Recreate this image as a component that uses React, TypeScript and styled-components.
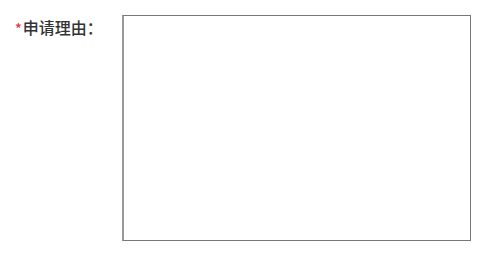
import React from "react";
import styled, { createGlobalStyle } from "styled-components";

const GlobalStyle = createGlobalStyle`
  body {
    margin: 0;
    background: #fff;
    font-family: "Noto Sans CJK SC", "Liberation Sans", sans-serif;
  }
`;

const Form = styled.form`
  padding: 15px 0 0 15px;
`;

const Row = styled.div`
  display: flex;
  align-items: flex-start;
`;

const Label = styled.label`
  width: 107px;
  padding-top: 2px;
  font-size: 16px;
  line-height: 20px;
  color: #333;
  font-weight: 500;
`;

const Required = styled.span`
  color: #e4393c;
  font-size: 14px;
  margin-right: 1px;
`;

const Reason = styled.textarea`
  box-sizing: border-box;
  width: 349px;
  height: 226px;
  border: 1px solid #777;
  border-left: 2px solid #999;
  outline: none;
  resize: none;
  padding: 4px;
  font-size: 14px;
  font-family: inherit;
`;

export default function App() {
  return (
    <>
      <GlobalStyle />
      <Form>
        <Row>
          <Label htmlFor="reason">
            <Required>*</Required>申请理由：
          </Label>
          <Reason id="reason" />
        </Row>
      </Form>
    </>
  );
}
